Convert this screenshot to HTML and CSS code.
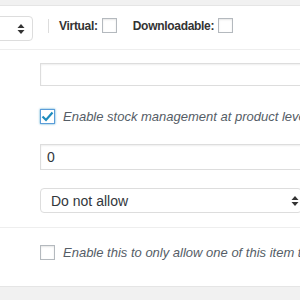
FILE: index.html
```html
<!DOCTYPE html>
<html lang="en">
<head>
    <meta charset="UTF-8">
    <title>Product data - Inventory</title>
    <link rel="stylesheet" href="styles.css">
</head>
<body>
    <div class="page">
        <div class="panel">
            <div class="panel-header">
                <div class="select type-select">
                    <span class="select-value">Simple product</span>
                    <svg class="select-arrows" width="8" height="12" viewBox="0 0 8 12">
                        <path d="M4 1 L7.5 5 H0.5 Z M4 11 L7.5 7 H0.5 Z" fill="#333"/>
                    </svg>
                </div>
                <span class="divider"></span>
                <label class="type-option">Virtual: <span class="checkbox"></span></label>
                <label class="type-option">Downloadable: <span class="checkbox"></span></label>
            </div>

            <div class="options-group">
                <div class="form-field field-sku">
                    <div class="input"></div>
                </div>
                <div class="form-field field-manage">
                    <span class="checkbox checked">
                        <svg width="13" height="11" viewBox="0 0 13 11">
                            <path d="M1.5 5.5 L5 9 L11.5 1.5" fill="none" stroke="#1e8cbe" stroke-width="2.2"/>
                        </svg>
                    </span>
                    <span class="description">Enable stock management at product level</span>
                </div>
                <div class="form-field field-qty">
                    <div class="input">0</div>
                </div>
                <div class="form-field field-backorders">
                    <div class="select">
                        <span class="select-value">Do not allow</span>
                        <svg class="select-arrows" width="8" height="12" viewBox="0 0 8 12">
                            <path d="M4 1 L7.5 5 H0.5 Z M4 11 L7.5 7 H0.5 Z" fill="#333"/>
                        </svg>
                    </div>
                </div>
            </div>

            <div class="options-group last">
                <div class="form-field field-sold">
                    <span class="checkbox"></span>
                    <span class="description">Enable this to only allow one of this item to be bought in a single order</span>
                </div>
            </div>
        </div>
    </div>
</body>
</html>
```

FILE: styles.css
```css
body {
    margin: 0;
    font-family: 'Liberation Sans', Arial, sans-serif;
    font-size: 13px;
    color: #32373c;
    background: #f1f1f1;
    overflow: hidden;
}

.page {
    width: 300px;
    height: 300px;
    overflow: hidden;
    padding-top: 5px;
    box-sizing: border-box;
}

.panel {
    width: 520px;
    background: #fff;
    border-top: 1px solid #e5e5e5;
    border-bottom: 1px solid #e5e5e5;
}

.panel-header {
    height: 44px;
    box-sizing: border-box;
    padding-bottom: 4px;
    display: flex;
    align-items: center;
    border-bottom: 1px solid #eee;
}

.select {
    height: 25px;
    box-sizing: border-box;
    border: 1px solid #ddd;
    border-radius: 4px;
    background: #fff;
    display: flex;
    align-items: center;
    padding: 0 7px 0 10px;
    font-size: 14px;
    color: #32373c;
    white-space: nowrap;
}

.select-value {
    flex: 1;
    min-width: 0;
    overflow: hidden;
}

.select-arrows {
    flex-shrink: 0;
}

.type-select {
    width: 80px;
    margin-left: -47px;
    margin-top: 6px;
}

.type-select .select-value {
    visibility: hidden;
}

.divider {
    width: 1px;
    height: 14px;
    background: #ddd;
    margin: 0 10px 0 15px;
}

.type-option {
    display: flex;
    align-items: center;
    gap: 4px;
    font-weight: bold;
    font-size: 12px;
    letter-spacing: -0.3px;
    color: #333;
    margin-right: 16px;
}

.checkbox {
    width: 15px;
    height: 15px;
    box-sizing: border-box;
    border: 1px solid #b4b9be;
    background: #fff;
    box-shadow: inset 0 1px 2px rgba(0,0,0,0.1);
    display: inline-flex;
    align-items: center;
    justify-content: center;
    flex-shrink: 0;
}

.checkbox.checked {
    border-color: #5b9dd9;
    box-shadow: 0 0 2px rgba(30,140,190,0.8);
}

.options-group {
    padding: 13px 0 14px 40px;
    border-bottom: 1px solid #eee;
}

.options-group.last {
    border-bottom: none;
    padding-top: 17px;
    padding-bottom: 26px;
}

.form-field {
    display: flex;
    align-items: center;
}

.input {
    width: 100%;
    height: 23px;
    box-sizing: border-box;
    border: 1px solid #ddd;
    box-shadow: inset 0 1px 2px rgba(0,0,0,0.07);
    padding: 0 6px;
    font-size: 14px;
    line-height: 23px;
    color: #32373c;
}

.field-manage {
    margin-top: 23px;
}

.field-qty {
    margin-top: 20px;
}

.field-qty .input {
    height: 26px;
    line-height: 24px;
}

.field-backorders {
    margin-top: 18px;
}

.field-backorders .select {
    width: 100%;
    padding-right: 2px;
    margin-right: 218px;
}

.description {
    font-style: italic;
    font-size: 13px;
    color: #555d66;
    margin-left: 8px;
    white-space: nowrap;
}
```
